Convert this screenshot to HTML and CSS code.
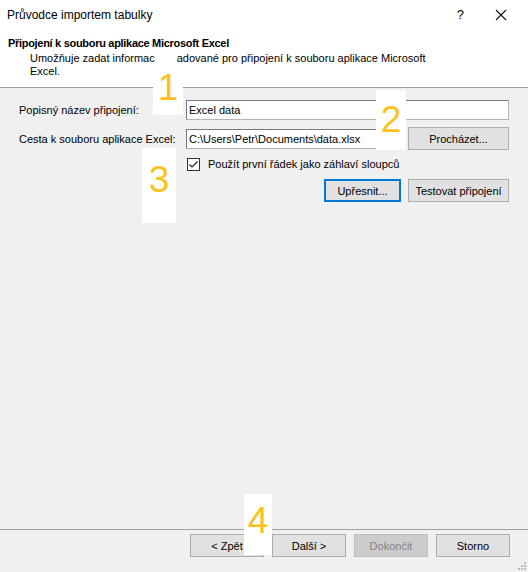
FILE: index.html
```html
<!DOCTYPE html>
<html lang="cs">
<head>
  <meta charset="UTF-8" />
  <title>Průvodce importem tabulky</title>
  <link rel="stylesheet" href="styles.css">
</head>
<body>
  <div class="dialog">
    <div class="top">
      <div class="titlebar">
        <span class="title">Průvodce importem tabulky</span>
        <span class="help">?</span>
        <span class="close">
          <svg width="12" height="12" viewBox="0 0 12 12"><path d="M1 1 L11 11 M11 1 L1 11" stroke="#111" stroke-width="1.1" fill="none"/></svg>
        </span>
      </div>
      <div class="intro">
        <h1>Připojení k souboru aplikace Microsoft Excel</h1>
        <p>Umožňuje zadat informac<span class="hidden-gap"></span>adované pro připojení k souboru aplikace Microsoft<br>Excel.</p>
      </div>
    </div>

    <div class="content">
      <div class="row">
        <label>Popisný název připojení:</label>
        <input type="text" class="field" value="Excel data" />
      </div>
      <div class="row">
        <label>Cesta k souboru aplikace Excel:</label>
        <input type="text" class="field path" value="C:\Users\Petr\Documents\data.xlsx" />
        <button class="btn browse">Procházet...</button>
      </div>
      <div class="check-row">
        <span class="checkbox">
          <svg width="13" height="13" viewBox="0 0 13 13"><rect x="0.5" y="0.5" width="12" height="12" fill="#fff" stroke="#333"/><path d="M2.5 6.5 L5 9 L10.5 3.5" stroke="#222" stroke-width="1.2" fill="none"/></svg>
        </span>
        <span>Použít první řádek jako záhlaví sloupců</span>
      </div>
      <div class="actions">
        <button class="btn focused">Upřesnit...</button>
        <button class="btn test">Testovat připojení</button>
      </div>
    </div>

    <div class="footer">
      <button class="btn nav">&lt; Zpět</button>
      <button class="btn nav">Další &gt;</button>
      <button class="btn nav disabled">Dokončit</button>
      <button class="btn nav">Storno</button>
      <svg class="grip" width="8" height="8" viewBox="0 0 8 8">
        <rect x="6" y="0" width="2" height="2" fill="#bcbcbc"/>
        <rect x="3" y="3" width="2" height="2" fill="#bcbcbc"/>
        <rect x="6" y="3" width="2" height="2" fill="#bcbcbc"/>
        <rect x="0" y="6" width="2" height="2" fill="#bcbcbc"/>
        <rect x="3" y="6" width="2" height="2" fill="#bcbcbc"/>
        <rect x="6" y="6" width="2" height="2" fill="#bcbcbc"/>
      </svg>
    </div>

    <div class="marker m1">1</div>
    <div class="marker m2">2</div>
    <div class="marker m3">3</div>
    <div class="marker m4">4</div>
  </div>
</body>
</html>
```

FILE: styles.css
```css
body {
  margin: 0;
  padding: 0;
  font-family: "Liberation Sans", Arial, sans-serif;
  font-size: 11px;
  color: #000;
  background: #f0f0f0;
}

.dialog {
  position: relative;
  display: flex;
  flex-direction: column;
  width: 528px;
  height: 572px;
  overflow: hidden;
}

.top {
  background: #fff;
  height: 87px;
  border-bottom: 1px solid #a0a0a0;
}

.titlebar {
  display: flex;
  align-items: center;
  height: 29px;
  padding-left: 7px;
}

.title {
  flex: 1;
  font-size: 12px;
}

.help {
  font-size: 13px;
  margin-right: 31px;
}

.close {
  display: flex;
  margin-right: 21px;
}

.intro {
  padding: 8px 0 0 8px;
}

.intro h1 {
  margin: 0;
  font-size: 11px;
  font-weight: bold;
  letter-spacing: -0.3px;
  line-height: 13px;
}

.intro p {
  margin: 2px 0 0 22px;
  line-height: 13px;
}

.hidden-gap {
  display: inline-block;
  width: 22px;
}

.content {
  flex: 1;
  padding: 12px 19px 0 19px;
}

.row {
  display: flex;
  align-items: center;
  margin-bottom: 7px;
}

.row label {
  width: 167px;
  flex-shrink: 0;
}

.field {
  flex: 1;
  height: 20px;
  box-sizing: border-box;
  border: 1px solid #7a7a7a;
  border-bottom-color: #b5b5b5;
  border-right-color: #b5b5b5;
  background: #fff;
  font-family: inherit;
  font-size: 11px;
  padding: 0 2px;
  margin: 0;
  outline: none;
}

.field.path {
  margin-right: 8px;
}

.btn {
  height: 23px;
  box-sizing: border-box;
  background: #e1e1e1;
  border: 1px solid #adadad;
  font-family: inherit;
  font-size: 11px;
  color: #000;
  padding: 0;
  margin: 0;
}

.browse {
  width: 101px;
}

.check-row {
  display: flex;
  align-items: center;
  margin-left: 168px;
  gap: 8px;
  height: 14px;
}

.checkbox {
  display: flex;
}

.actions {
  display: flex;
  justify-content: flex-end;
  gap: 7px;
  margin-top: 8px;
}

.focused {
  width: 77px;
  border: 2px solid #0078d7;
}

.test {
  width: 101px;
}

.footer {
  position: relative;
  display: flex;
  justify-content: flex-end;
  gap: 8px;
  height: 43px;
  box-sizing: border-box;
  border-top: 1px solid #a0a0a0;
  padding: 4px 18px 0 0;
}

.nav {
  width: 74px;
}

.disabled {
  background: #cccccc;
  border-color: #bfbfbf;
  color: #838383;
}

.grip {
  position: absolute;
  right: 2px;
  bottom: 2px;
}

.marker {
  position: absolute;
  box-sizing: border-box;
  background: #fff;
  color: #fcc21b;
  font-size: 37px;
  line-height: 1;
  display: flex;
  justify-content: center;
}

.m1 {
  left: 153px;
  top: 67px;
  width: 30px;
  height: 48px;
  padding-top: 2px;
}

.m2 {
  left: 376px;
  top: 90px;
  width: 30px;
  height: 60px;
  padding-top: 11px;
}

.m3 {
  left: 142px;
  top: 148px;
  width: 34px;
  height: 75px;
  padding-top: 13px;
}

.m4 {
  left: 244px;
  top: 494px;
  width: 28px;
  height: 61px;
  padding-top: 8px;
}
```
